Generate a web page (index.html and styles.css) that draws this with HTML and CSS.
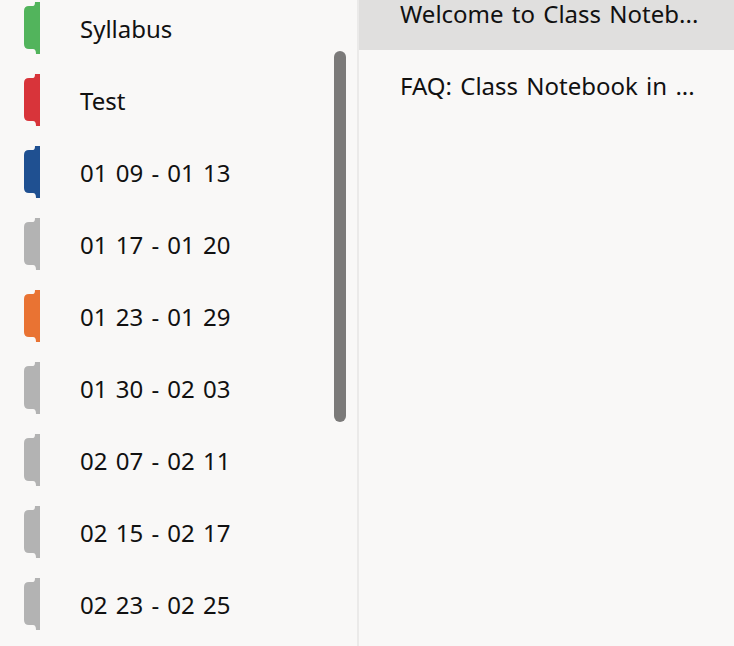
FILE: index.html
```html
<!DOCTYPE html>
<html lang="en">
<head>
    <meta charset="UTF-8">
    <meta name="viewport" content="width=device-width, initial-scale=1.0">
    <title>Class Notebook</title>
    <link rel="stylesheet" href="styles.css">
</head>
<body>
    <div class="notebook">
        <div class="sections">
            <ul class="section-list">
                <li class="section">
                    <svg class="tab" viewBox="0 0 16 52" width="16" height="52"><path class="tab-green" d="M16 0V52H12Q12 47 9 47H5Q0 47 0 42V9Q0 4 5 4H9Q11 4 11 0Z"/></svg>
                    <span class="section-name">Syllabus</span>
                </li>
                <li class="section">
                    <svg class="tab" viewBox="0 0 16 52" width="16" height="52"><path class="tab-red" d="M16 0V52H12Q12 47 9 47H5Q0 47 0 42V9Q0 4 5 4H9Q11 4 11 0Z"/></svg>
                    <span class="section-name">Test</span>
                </li>
                <li class="section">
                    <svg class="tab" viewBox="0 0 16 52" width="16" height="52"><path class="tab-blue" d="M16 0V52H12Q12 47 9 47H5Q0 47 0 42V9Q0 4 5 4H9Q11 4 11 0Z"/></svg>
                    <span class="section-name">01 09 - 01 13</span>
                </li>
                <li class="section">
                    <svg class="tab" viewBox="0 0 16 52" width="16" height="52"><path class="tab-gray" d="M16 0V52H12Q12 47 9 47H5Q0 47 0 42V9Q0 4 5 4H9Q11 4 11 0Z"/></svg>
                    <span class="section-name">01 17 - 01 20</span>
                </li>
                <li class="section">
                    <svg class="tab" viewBox="0 0 16 52" width="16" height="52"><path class="tab-orange" d="M16 0V52H12Q12 47 9 47H5Q0 47 0 42V9Q0 4 5 4H9Q11 4 11 0Z"/></svg>
                    <span class="section-name">01 23 - 01 29</span>
                </li>
                <li class="section">
                    <svg class="tab" viewBox="0 0 16 52" width="16" height="52"><path class="tab-gray" d="M16 0V52H12Q12 47 9 47H5Q0 47 0 42V9Q0 4 5 4H9Q11 4 11 0Z"/></svg>
                    <span class="section-name">01 30 - 02 03</span>
                </li>
                <li class="section">
                    <svg class="tab" viewBox="0 0 16 52" width="16" height="52"><path class="tab-gray" d="M16 0V52H12Q12 47 9 47H5Q0 47 0 42V9Q0 4 5 4H9Q11 4 11 0Z"/></svg>
                    <span class="section-name">02 07 - 02 11</span>
                </li>
                <li class="section">
                    <svg class="tab" viewBox="0 0 16 52" width="16" height="52"><path class="tab-gray" d="M16 0V52H12Q12 47 9 47H5Q0 47 0 42V9Q0 4 5 4H9Q11 4 11 0Z"/></svg>
                    <span class="section-name">02 15 - 02 17</span>
                </li>
                <li class="section">
                    <svg class="tab" viewBox="0 0 16 52" width="16" height="52"><path class="tab-gray" d="M16 0V52H12Q12 47 9 47H5Q0 47 0 42V9Q0 4 5 4H9Q11 4 11 0Z"/></svg>
                    <span class="section-name">02 23 - 02 25</span>
                </li>
            </ul>
            <div class="scroll-thumb"></div>
        </div>

        <div class="pages">
            <ul class="page-list">
                <li class="page selected">Welcome to Class Noteb...</li>
                <li class="page">FAQ: Class Notebook in ...</li>
            </ul>
        </div>
    </div>
</body>
</html>
```

FILE: styles.css
```css
html, body {
  margin: 0;
  padding: 0;
  height: 100%;
  overflow: hidden;
}

body {
  font-family: "Noto Sans", "Open Sans", sans-serif;
  font-size: 24px;
  word-spacing: 2px;
  color: #111111;
  background-color: #f9f8f7;
}

ul {
  list-style: none;
  margin: 0;
  padding: 0;
}

.notebook {
  display: flex;
  height: 100%;
}

.sections {
  position: relative;
  width: 357px;
  flex-shrink: 0;
  border-right: 2px solid #ebeae9;
}

.section-list {
  margin-top: -8px;
}

.section {
  display: flex;
  align-items: center;
  height: 72px;
  padding-left: 24px;
}

.tab {
  display: block;
  flex-shrink: 0;
}

.tab-green { fill: #52b45c; }
.tab-red { fill: #d8343a; }
.tab-blue { fill: #1f5091; }
.tab-gray { fill: #b3b3b3; }
.tab-orange { fill: #e97333; }

.section-name {
  margin-left: 40px;
  white-space: nowrap;
}

/* overlay scrollbar */
.scroll-thumb {
  position: absolute;
  top: 51px;
  left: 334px;
  width: 12px;
  height: 371px;
  border-radius: 6px;
  background-color: #7b7a79;
}

.pages {
  flex: 1;
}

.page {
  height: 72px;
  line-height: 72px;
  padding-left: 41px;
  white-space: nowrap;
}

.page.selected {
  height: 50px;
  line-height: 28px;
  background-color: #e0dfde;
}
```
